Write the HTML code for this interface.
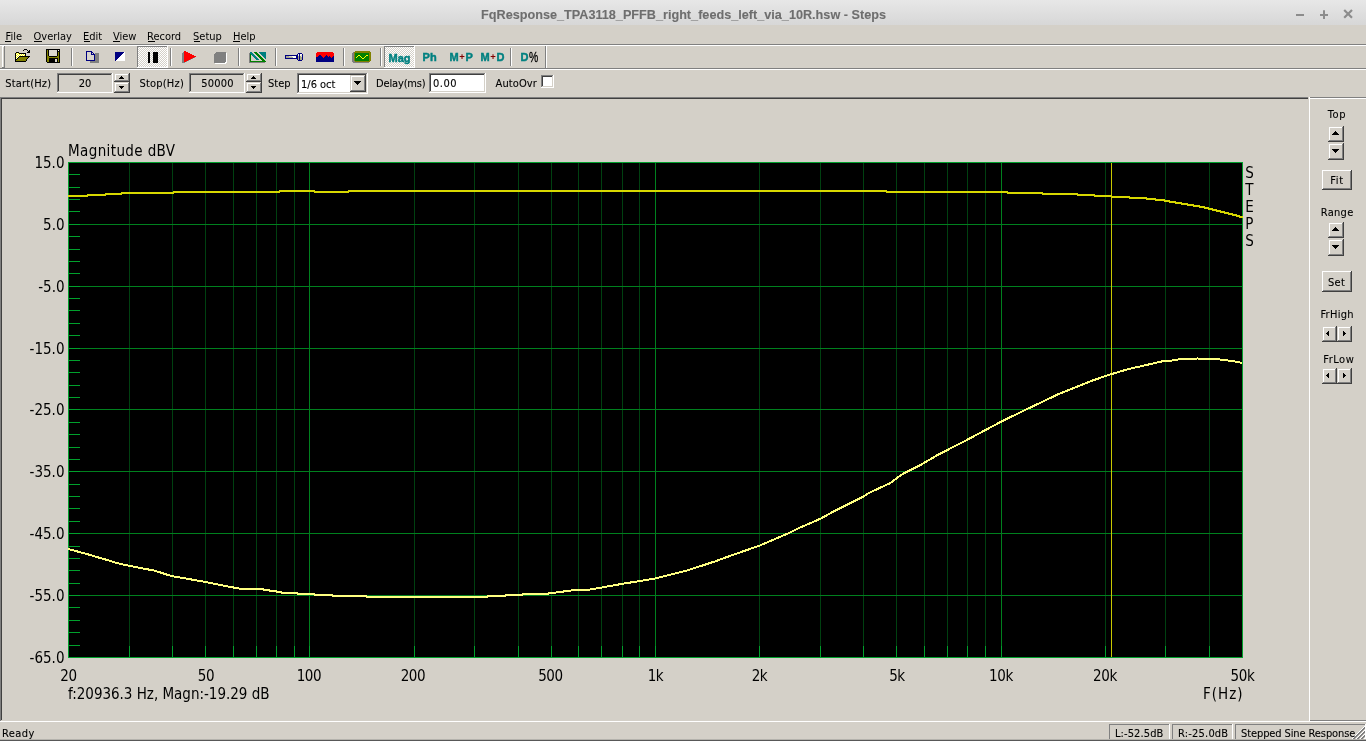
<!DOCTYPE html><html lang="en"><head><meta charset="utf-8"><title>FqResponse_TPA3118_PFFB_right_feeds_left_via_10R.hsw - Steps</title><style>html,body{margin:0;padding:0}body{width:1366px;height:741px;position:relative;overflow:hidden;background:#d4d0c8;font-family:"DejaVu Sans Condensed","Liberation Sans",sans-serif;font-size:11px;color:#000}svg{position:absolute;left:0;top:0;overflow:visible}.t{position:absolute;white-space:pre;margin:0;padding:0;-webkit-text-stroke:0.1px currentColor}u{text-decoration:underline;text-underline-offset:1px;text-decoration-thickness:1px}#titlebar{position:absolute;left:0;top:0;width:1366px;height:25px;background:linear-gradient(#e7e7e7,#d7d7d7)}#app{position:absolute;left:0;top:0;width:1366px;height:741px;overflow:hidden;will-change:transform}</style></head><body><div id="app"><div id="titlebar"></div><div id="title"><span class="t" id="ttl" style="top:8px;line-height:14px;font-size:12.66px;font-weight:700;color:#6e6e6e;font-family:'Liberation Sans','DejaVu Sans Condensed',sans-serif;left:383.5px;width:600px;text-align:center;">FqResponse_TPA3118_PFFB_right_feeds_left_via_10R.hsw - Steps</span><svg width="1366" height="741" viewBox="0 0 1366 741"><g stroke="#8c8c8c" stroke-width="2" fill="none"><path d="M1296 15H1304"/><path d="M1320 15H1328M1324 10.3V18.9"/><path d="M1344.2 10L1352 17.8M1352 10L1344.2 17.8" stroke-width="2.2"/></g></svg></div><div id="menubar"><span class="t" style="-webkit-text-stroke:0;top:30px;line-height:13px;left:5.5px;">File</span><span class="t" style="-webkit-text-stroke:0;top:30px;line-height:13px;left:33.5px;">Overlay</span><span class="t" style="-webkit-text-stroke:0;top:30px;line-height:13px;left:83px;">Edit</span><span class="t" style="-webkit-text-stroke:0;top:30px;line-height:13px;left:113px;">View</span><span class="t" style="-webkit-text-stroke:0;top:30px;line-height:13px;left:147px;">Record</span><span class="t" style="-webkit-text-stroke:0;top:30px;line-height:13px;left:193px;">Setup</span><span class="t" style="-webkit-text-stroke:0;top:30px;line-height:13px;left:233px;">Help</span><svg width="1366" height="741" viewBox="0 0 1366 741" shape-rendering="crispEdges"><rect x="0" y="44" width="1366" height="1" fill="#808080"/><rect x="0" y="45" width="1366" height="1" fill="#ffffff"/><rect x="5" y="41" width="6" height="1" fill="#000"/><rect x="34" y="41" width="8" height="1" fill="#000"/><rect x="84" y="41" width="6" height="1" fill="#000"/><rect x="113" y="41" width="7" height="1" fill="#000"/><rect x="148" y="41" width="7" height="1" fill="#000"/><rect x="194" y="41" width="6" height="1" fill="#000"/><rect x="233" y="41" width="7" height="1" fill="#000"/></svg></div><div id="toolbar"><svg width="1366" height="741" viewBox="0 0 1366 741" shape-rendering="crispEdges"><defs><pattern id="dith" width="2" height="2" patternUnits="userSpaceOnUse"><rect width="2" height="2" fill="#d4d0c8"/><rect width="1" height="1" fill="#fff"/><rect x="1" y="1" width="1" height="1" fill="#fff"/></pattern></defs><rect x="2" y="46" width="1" height="21" fill="#ffffff"/><rect x="2" y="46" width="2" height="1" fill="#ffffff"/><rect x="4" y="46" width="1" height="22" fill="#808080"/><rect x="2" y="67" width="3" height="1" fill="#808080"/><rect x="71" y="48" width="1" height="18" fill="#808080"/><rect x="72" y="48" width="1" height="18" fill="#ffffff"/><rect x="170" y="48" width="1" height="18" fill="#808080"/><rect x="171" y="48" width="1" height="18" fill="#ffffff"/><rect x="238" y="48" width="1" height="18" fill="#808080"/><rect x="239" y="48" width="1" height="18" fill="#ffffff"/><rect x="275" y="48" width="1" height="18" fill="#808080"/><rect x="276" y="48" width="1" height="18" fill="#ffffff"/><rect x="343" y="48" width="1" height="18" fill="#808080"/><rect x="344" y="48" width="1" height="18" fill="#ffffff"/><rect x="380" y="48" width="1" height="18" fill="#808080"/><rect x="381" y="48" width="1" height="18" fill="#ffffff"/><rect x="510" y="48" width="1" height="18" fill="#808080"/><rect x="511" y="48" width="1" height="18" fill="#ffffff"/><rect x="545" y="46" width="1" height="22" fill="#808080"/><rect x="546" y="46" width="1" height="22" fill="#ffffff"/><rect x="0" y="68" width="1366" height="1" fill="#808080"/><rect x="0" y="69" width="1366" height="1" fill="#ffffff"/><rect x="24" y="49" width="3" height="1" fill="#000"/><rect x="23" y="50" width="1" height="1" fill="#000"/><rect x="27" y="50" width="1" height="1" fill="#000"/><rect x="29" y="50" width="1" height="1" fill="#000"/><rect x="28" y="51" width="2" height="1" fill="#000"/><rect x="16" y="52" width="3" height="1" fill="#000"/><rect x="27" y="52" width="3" height="1" fill="#000"/><rect x="15" y="53" width="1" height="1" fill="#000"/><rect x="16" y="53" width="1" height="1" fill="#ffff00"/><rect x="17" y="53" width="1" height="1" fill="#fff"/><rect x="18" y="53" width="1" height="1" fill="#ffff00"/><rect x="19" y="53" width="7" height="1" fill="#000"/><rect x="15" y="54" width="1" height="1" fill="#000"/><rect x="16" y="54" width="1" height="1" fill="#fff"/><rect x="17" y="54" width="1" height="1" fill="#ffff00"/><rect x="18" y="54" width="1" height="1" fill="#fff"/><rect x="19" y="54" width="1" height="1" fill="#ffff00"/><rect x="20" y="54" width="1" height="1" fill="#fff"/><rect x="21" y="54" width="1" height="1" fill="#ffff00"/><rect x="22" y="54" width="1" height="1" fill="#fff"/><rect x="23" y="54" width="1" height="1" fill="#ffff00"/><rect x="24" y="54" width="1" height="1" fill="#fff"/><rect x="25" y="54" width="1" height="1" fill="#000"/><rect x="15" y="55" width="1" height="1" fill="#000"/><rect x="16" y="55" width="1" height="1" fill="#ffff00"/><rect x="17" y="55" width="1" height="1" fill="#fff"/><rect x="18" y="55" width="1" height="1" fill="#ffff00"/><rect x="19" y="55" width="1" height="1" fill="#fff"/><rect x="20" y="55" width="1" height="1" fill="#ffff00"/><rect x="21" y="55" width="1" height="1" fill="#fff"/><rect x="22" y="55" width="1" height="1" fill="#ffff00"/><rect x="23" y="55" width="1" height="1" fill="#fff"/><rect x="24" y="55" width="1" height="1" fill="#ffff00"/><rect x="25" y="55" width="1" height="1" fill="#000"/><rect x="15" y="56" width="1" height="1" fill="#000"/><rect x="16" y="56" width="1" height="1" fill="#fff"/><rect x="17" y="56" width="1" height="1" fill="#ffff00"/><rect x="18" y="56" width="1" height="1" fill="#fff"/><rect x="19" y="56" width="11" height="1" fill="#000"/><rect x="15" y="57" width="1" height="1" fill="#000"/><rect x="16" y="57" width="1" height="1" fill="#ffff00"/><rect x="17" y="57" width="1" height="1" fill="#fff"/><rect x="18" y="57" width="1" height="1" fill="#000"/><rect x="19" y="57" width="9" height="1" fill="#808000"/><rect x="28" y="57" width="1" height="1" fill="#000"/><rect x="15" y="58" width="1" height="1" fill="#000"/><rect x="16" y="58" width="1" height="1" fill="#fff"/><rect x="17" y="58" width="1" height="1" fill="#000"/><rect x="18" y="58" width="9" height="1" fill="#808000"/><rect x="27" y="58" width="1" height="1" fill="#000"/><rect x="15" y="59" width="2" height="1" fill="#000"/><rect x="17" y="59" width="9" height="1" fill="#808000"/><rect x="26" y="59" width="1" height="1" fill="#000"/><rect x="15" y="60" width="1" height="1" fill="#000"/><rect x="16" y="60" width="10" height="1" fill="#808000"/><rect x="26" y="60" width="1" height="1" fill="#000"/><rect x="15" y="61" width="11" height="1" fill="#000"/><rect x="46" y="49" width="14" height="1" fill="#000"/><rect x="46" y="50" width="1" height="1" fill="#000"/><rect x="47" y="50" width="1" height="1" fill="#808000"/><rect x="48" y="50" width="1" height="1" fill="#000"/><rect x="49" y="50" width="8" height="1" fill="#dcd8d0"/><rect x="57" y="50" width="1" height="1" fill="#000"/><rect x="58" y="50" width="1" height="1" fill="#fff"/><rect x="59" y="50" width="1" height="1" fill="#000"/><rect x="46" y="51" width="1" height="1" fill="#000"/><rect x="47" y="51" width="1" height="1" fill="#808000"/><rect x="48" y="51" width="1" height="1" fill="#000"/><rect x="49" y="51" width="8" height="1" fill="#dcd8d0"/><rect x="57" y="51" width="3" height="1" fill="#000"/><rect x="46" y="52" width="1" height="1" fill="#000"/><rect x="47" y="52" width="1" height="1" fill="#808000"/><rect x="48" y="52" width="1" height="1" fill="#000"/><rect x="49" y="52" width="8" height="1" fill="#dcd8d0"/><rect x="57" y="52" width="1" height="1" fill="#000"/><rect x="58" y="52" width="1" height="1" fill="#808000"/><rect x="59" y="52" width="1" height="1" fill="#000"/><rect x="46" y="53" width="1" height="1" fill="#000"/><rect x="47" y="53" width="1" height="1" fill="#808000"/><rect x="48" y="53" width="1" height="1" fill="#000"/><rect x="49" y="53" width="8" height="1" fill="#dcd8d0"/><rect x="57" y="53" width="1" height="1" fill="#000"/><rect x="58" y="53" width="1" height="1" fill="#808000"/><rect x="59" y="53" width="1" height="1" fill="#000"/><rect x="46" y="54" width="1" height="1" fill="#000"/><rect x="47" y="54" width="1" height="1" fill="#808000"/><rect x="48" y="54" width="1" height="1" fill="#000"/><rect x="49" y="54" width="8" height="1" fill="#dcd8d0"/><rect x="57" y="54" width="1" height="1" fill="#000"/><rect x="58" y="54" width="1" height="1" fill="#808000"/><rect x="59" y="54" width="1" height="1" fill="#000"/><rect x="46" y="55" width="1" height="1" fill="#000"/><rect x="47" y="55" width="1" height="1" fill="#808000"/><rect x="48" y="55" width="1" height="1" fill="#000"/><rect x="49" y="55" width="8" height="1" fill="#dcd8d0"/><rect x="57" y="55" width="1" height="1" fill="#000"/><rect x="58" y="55" width="1" height="1" fill="#808000"/><rect x="59" y="55" width="1" height="1" fill="#000"/><rect x="46" y="56" width="1" height="1" fill="#000"/><rect x="47" y="56" width="2" height="1" fill="#808000"/><rect x="49" y="56" width="8" height="1" fill="#000"/><rect x="57" y="56" width="2" height="1" fill="#808000"/><rect x="59" y="56" width="1" height="1" fill="#000"/><rect x="46" y="57" width="1" height="1" fill="#000"/><rect x="47" y="57" width="12" height="1" fill="#808000"/><rect x="59" y="57" width="1" height="1" fill="#000"/><rect x="46" y="58" width="1" height="1" fill="#000"/><rect x="47" y="58" width="2" height="1" fill="#808000"/><rect x="49" y="58" width="9" height="1" fill="#000"/><rect x="58" y="58" width="1" height="1" fill="#808000"/><rect x="59" y="58" width="1" height="1" fill="#000"/><rect x="46" y="59" width="1" height="1" fill="#000"/><rect x="47" y="59" width="2" height="1" fill="#808000"/><rect x="49" y="59" width="6" height="1" fill="#000"/><rect x="55" y="59" width="2" height="1" fill="#dcd8d0"/><rect x="57" y="59" width="1" height="1" fill="#000"/><rect x="58" y="59" width="1" height="1" fill="#808000"/><rect x="59" y="59" width="1" height="1" fill="#000"/><rect x="46" y="60" width="1" height="1" fill="#000"/><rect x="47" y="60" width="2" height="1" fill="#808000"/><rect x="49" y="60" width="6" height="1" fill="#000"/><rect x="55" y="60" width="2" height="1" fill="#dcd8d0"/><rect x="57" y="60" width="1" height="1" fill="#000"/><rect x="58" y="60" width="1" height="1" fill="#808000"/><rect x="59" y="60" width="1" height="1" fill="#000"/><rect x="46" y="61" width="1" height="1" fill="#000"/><rect x="47" y="61" width="2" height="1" fill="#808000"/><rect x="49" y="61" width="6" height="1" fill="#000"/><rect x="55" y="61" width="2" height="1" fill="#dcd8d0"/><rect x="57" y="61" width="1" height="1" fill="#000"/><rect x="58" y="61" width="1" height="1" fill="#808000"/><rect x="59" y="61" width="1" height="1" fill="#000"/><rect x="47" y="62" width="13" height="1" fill="#000"/><rect x="90" y="53" width="9" height="10" fill="#808080"/><rect x="87" y="52" width="7" height="8" fill="#d8d4cc"/><rect x="93" y="52" width="1" height="1" fill="#d4d0c8"/><rect x="94" y="53" width="1" height="1" fill="#d4d0c8"/><rect x="86" y="51" width="6" height="1" fill="#000080"/><rect x="86" y="52" width="1" height="1" fill="#000080"/><rect x="91" y="52" width="2" height="1" fill="#000080"/><rect x="86" y="53" width="1" height="1" fill="#000080"/><rect x="91" y="53" width="1" height="1" fill="#000080"/><rect x="93" y="53" width="1" height="1" fill="#000080"/><rect x="86" y="54" width="1" height="1" fill="#000080"/><rect x="91" y="54" width="4" height="1" fill="#000080"/><rect x="86" y="55" width="1" height="1" fill="#000080"/><rect x="94" y="55" width="1" height="1" fill="#000080"/><rect x="86" y="56" width="1" height="1" fill="#000080"/><rect x="94" y="56" width="1" height="1" fill="#000080"/><rect x="86" y="57" width="1" height="1" fill="#000080"/><rect x="94" y="57" width="1" height="1" fill="#000080"/><rect x="86" y="58" width="1" height="1" fill="#000080"/><rect x="94" y="58" width="1" height="1" fill="#000080"/><rect x="86" y="59" width="1" height="1" fill="#000080"/><rect x="94" y="59" width="1" height="1" fill="#000080"/><rect x="86" y="60" width="9" height="1" fill="#000080"/><rect x="115" y="52" width="9" height="1" fill="#000080"/><rect x="124" y="52" width="1" height="1" fill="#fff"/><rect x="115" y="53" width="8" height="1" fill="#000080"/><rect x="123" y="53" width="2" height="1" fill="#fff"/><rect x="115" y="54" width="7" height="1" fill="#000080"/><rect x="122" y="54" width="3" height="1" fill="#fff"/><rect x="115" y="55" width="6" height="1" fill="#000080"/><rect x="121" y="55" width="4" height="1" fill="#fff"/><rect x="115" y="56" width="5" height="1" fill="#000080"/><rect x="120" y="56" width="5" height="1" fill="#fff"/><rect x="115" y="57" width="4" height="1" fill="#000080"/><rect x="119" y="57" width="6" height="1" fill="#fff"/><rect x="115" y="58" width="3" height="1" fill="#000080"/><rect x="118" y="58" width="7" height="1" fill="#fff"/><rect x="115" y="59" width="2" height="1" fill="#000080"/><rect x="117" y="59" width="8" height="1" fill="#fff"/><rect x="115" y="60" width="1" height="1" fill="#000080"/><rect x="116" y="60" width="9" height="1" fill="#fff"/><rect x="137" y="46" width="31" height="22" fill="url(#dith)"/><rect x="137" y="46" width="30" height="1" fill="#808080"/><rect x="137" y="46" width="1" height="21" fill="#808080"/><rect x="137" y="67" width="31" height="1" fill="#ffffff"/><rect x="167" y="46" width="1" height="22" fill="#ffffff"/><rect x="148" y="52" width="2" height="11" fill="#000"/><rect x="153" y="52" width="5" height="11" fill="#000"/><rect x="183" y="52" width="2" height="1" fill="#808080"/><rect x="183" y="53" width="4" height="1" fill="#808080"/><rect x="182" y="53" width="1" height="1" fill="#808080"/><rect x="183" y="54" width="6" height="1" fill="#808080"/><rect x="182" y="54" width="1" height="1" fill="#808080"/><rect x="183" y="55" width="8" height="1" fill="#808080"/><rect x="182" y="55" width="1" height="1" fill="#808080"/><rect x="183" y="56" width="10" height="1" fill="#808080"/><rect x="182" y="56" width="1" height="1" fill="#808080"/><rect x="183" y="57" width="12" height="1" fill="#808080"/><rect x="182" y="57" width="1" height="1" fill="#808080"/><rect x="183" y="58" width="10" height="1" fill="#808080"/><rect x="182" y="58" width="1" height="1" fill="#808080"/><rect x="183" y="59" width="8" height="1" fill="#808080"/><rect x="182" y="59" width="1" height="1" fill="#808080"/><rect x="183" y="60" width="6" height="1" fill="#808080"/><rect x="182" y="60" width="1" height="1" fill="#808080"/><rect x="183" y="61" width="4" height="1" fill="#808080"/><rect x="182" y="61" width="1" height="1" fill="#808080"/><rect x="183" y="62" width="2" height="1" fill="#808080"/><rect x="182" y="62" width="1" height="1" fill="#808080"/><rect x="184" y="51" width="2" height="1" fill="#ff0000"/><rect x="184" y="52" width="4" height="1" fill="#ff0000"/><rect x="184" y="53" width="6" height="1" fill="#ff0000"/><rect x="184" y="54" width="8" height="1" fill="#ff0000"/><rect x="184" y="55" width="10" height="1" fill="#ff0000"/><rect x="184" y="56" width="12" height="1" fill="#ff0000"/><rect x="184" y="57" width="10" height="1" fill="#ff0000"/><rect x="184" y="58" width="8" height="1" fill="#ff0000"/><rect x="184" y="59" width="6" height="1" fill="#ff0000"/><rect x="184" y="60" width="4" height="1" fill="#ff0000"/><rect x="184" y="61" width="2" height="1" fill="#ff0000"/><rect x="217" y="53" width="10" height="1" fill="#fff"/><rect x="216" y="54" width="11" height="1" fill="#fff"/><rect x="215" y="55" width="12" height="8" fill="#fff"/><rect x="215" y="63" width="11" height="1" fill="#fff"/><rect x="216" y="52" width="10" height="1" fill="#808080"/><rect x="215" y="53" width="11" height="1" fill="#808080"/><rect x="214" y="54" width="12" height="8" fill="#808080"/><rect x="214" y="62" width="11" height="1" fill="#808080"/><rect x="249" y="53" width="1" height="10" fill="#808080"/><rect x="249" y="62" width="16" height="1" fill="#808080"/><rect x="250" y="52" width="2" height="1" fill="#008080"/><rect x="250" y="53" width="3" height="1" fill="#008080"/><rect x="251" y="54" width="3" height="1" fill="#008080"/><rect x="252" y="55" width="3" height="1" fill="#008080"/><rect x="253" y="56" width="3" height="1" fill="#008080"/><rect x="254" y="57" width="3" height="1" fill="#008080"/><rect x="255" y="58" width="3" height="1" fill="#008080"/><rect x="256" y="59" width="3" height="1" fill="#008080"/><rect x="259" y="52" width="7" height="1" fill="#008080"/><rect x="260" y="53" width="6" height="1" fill="#008080"/><rect x="261" y="54" width="5" height="1" fill="#008080"/><rect x="262" y="55" width="4" height="1" fill="#008080"/><rect x="263" y="56" width="3" height="1" fill="#008080"/><rect x="264" y="57" width="2" height="1" fill="#008080"/><rect x="265" y="58" width="1" height="1" fill="#008080"/><rect x="254" y="52" width="3" height="1" fill="#008000"/><rect x="255" y="53" width="3" height="1" fill="#008000"/><rect x="256" y="54" width="3" height="1" fill="#008000"/><rect x="257" y="55" width="3" height="1" fill="#008000"/><rect x="258" y="56" width="3" height="1" fill="#008000"/><rect x="259" y="57" width="3" height="1" fill="#008000"/><rect x="260" y="58" width="3" height="1" fill="#008000"/><rect x="261" y="59" width="3" height="1" fill="#008000"/><rect x="262" y="60" width="3" height="1" fill="#008000"/><rect x="263" y="61" width="3" height="1" fill="#008000"/><rect x="250" y="54" width="1" height="8" fill="#008000"/><rect x="250" y="61" width="16" height="1" fill="#008000"/><rect x="285" y="55" width="13" height="4" fill="#000080"/><rect x="286" y="56" width="10" height="2" fill="#fffff0"/><rect x="286" y="56" width="3" height="1" fill="#a8a890"/><rect x="289" y="56" width="3" height="1" fill="#d8d8c8"/><rect x="286" y="57" width="7" height="1" fill="#a8a890"/><rect x="298" y="53" width="4" height="8" fill="#000080"/><rect x="297" y="54" width="6" height="6" fill="#000080"/><rect x="298" y="54" width="1" height="2" fill="#f4f4e4"/><rect x="298" y="56" width="1" height="4" fill="#a4a488"/><rect x="300" y="54" width="2" height="2" fill="#fffff0"/><rect x="300" y="56" width="2" height="4" fill="#a8a888"/><rect x="301" y="55" width="1" height="2" fill="#e0e0d0"/><rect x="316" y="53" width="1" height="4" fill="#ff0000"/><rect x="316" y="57" width="1" height="5" fill="#000080"/><rect x="317" y="52" width="1" height="5" fill="#ff0000"/><rect x="317" y="57" width="1" height="5" fill="#000080"/><rect x="318" y="52" width="1" height="4" fill="#ff0000"/><rect x="318" y="56" width="1" height="6" fill="#000080"/><rect x="319" y="52" width="1" height="3" fill="#ff0000"/><rect x="319" y="55" width="1" height="7" fill="#000080"/><rect x="320" y="52" width="1" height="3" fill="#ff0000"/><rect x="320" y="55" width="1" height="7" fill="#000080"/><rect x="321" y="52" width="1" height="4" fill="#ff0000"/><rect x="321" y="56" width="1" height="6" fill="#000080"/><rect x="322" y="52" width="1" height="5" fill="#ff0000"/><rect x="322" y="57" width="1" height="5" fill="#000080"/><rect x="323" y="52" width="1" height="6" fill="#ff0000"/><rect x="323" y="58" width="1" height="4" fill="#000080"/><rect x="324" y="52" width="1" height="5" fill="#ff0000"/><rect x="324" y="57" width="1" height="5" fill="#000080"/><rect x="325" y="52" width="1" height="4" fill="#ff0000"/><rect x="325" y="56" width="1" height="6" fill="#000080"/><rect x="326" y="52" width="1" height="3" fill="#ff0000"/><rect x="326" y="55" width="1" height="7" fill="#000080"/><rect x="327" y="52" width="1" height="4" fill="#ff0000"/><rect x="327" y="56" width="1" height="6" fill="#000080"/><rect x="328" y="52" width="1" height="5" fill="#ff0000"/><rect x="328" y="57" width="1" height="5" fill="#000080"/><rect x="329" y="52" width="1" height="4" fill="#ff0000"/><rect x="329" y="56" width="1" height="6" fill="#000080"/><rect x="330" y="52" width="1" height="5" fill="#ff0000"/><rect x="330" y="57" width="1" height="5" fill="#000080"/><rect x="331" y="52" width="1" height="6" fill="#ff0000"/><rect x="331" y="58" width="1" height="4" fill="#000080"/><rect x="332" y="52" width="1" height="5" fill="#ff0000"/><rect x="332" y="57" width="1" height="5" fill="#000080"/><rect x="333" y="53" width="1" height="3" fill="#ff0000"/><rect x="333" y="56" width="1" height="6" fill="#000080"/><rect x="352" y="53" width="3" height="9" fill="#808080"/><rect x="353" y="52" width="1" height="1" fill="#808080"/><rect x="353" y="62" width="16" height="1" fill="#808080"/><rect x="355" y="51" width="15" height="11" fill="#808000"/><rect x="354" y="52" width="17" height="9" fill="#808000"/><rect x="355" y="53" width="14" height="8" fill="#008000"/><rect x="356" y="57" width="1" height="1" fill="#ffff00"/><rect x="357" y="56" width="1" height="1" fill="#ffff00"/><rect x="358" y="55" width="1" height="1" fill="#ffff00"/><rect x="359" y="55" width="1" height="1" fill="#ffff00"/><rect x="360" y="56" width="1" height="1" fill="#ffff00"/><rect x="361" y="57" width="1" height="1" fill="#ffff00"/><rect x="362" y="58" width="1" height="1" fill="#ffff00"/><rect x="363" y="58" width="1" height="1" fill="#ffff00"/><rect x="364" y="57" width="1" height="1" fill="#ffff00"/><rect x="365" y="56" width="1" height="1" fill="#ffff00"/><rect x="366" y="55" width="1" height="1" fill="#ffff00"/><rect x="367" y="55" width="1" height="1" fill="#ffff00"/><rect x="384" y="46" width="31" height="22" fill="url(#dith)"/><rect x="384" y="46" width="30" height="1" fill="#808080"/><rect x="384" y="46" width="1" height="21" fill="#808080"/><rect x="384" y="67" width="31" height="1" fill="#ffffff"/><rect x="414" y="46" width="1" height="22" fill="#ffffff"/></svg><span class="t" id="tMag" style="-webkit-text-stroke:0.45px #008080;top:52px;line-height:12px;font-weight:700;color:#008080;font-family:'Liberation Sans','DejaVu Sans Condensed',sans-serif;left:388.6px;">Mag</span><span class="t" id="tPh" style="-webkit-text-stroke:0.45px #008080;top:51px;line-height:12px;font-weight:700;color:#008080;font-family:'Liberation Sans','DejaVu Sans Condensed',sans-serif;left:422.6px;">Ph</span><span class="t" id="tMP" style="-webkit-text-stroke:0.45px #008080;top:51px;line-height:12px;font-weight:700;color:#008080;font-family:'Liberation Sans','DejaVu Sans Condensed',sans-serif;left:449.6px;">M<span style="color:#800000;-webkit-text-stroke:0;font-size:9.5px;position:relative;top:-1.5px;margin:0 0.6px">+</span>P</span><span class="t" id="tMD" style="-webkit-text-stroke:0.45px #008080;top:51px;line-height:12px;font-weight:700;color:#008080;font-family:'Liberation Sans','DejaVu Sans Condensed',sans-serif;left:480.6px;">M<span style="color:#800000;-webkit-text-stroke:0;font-size:9.5px;position:relative;top:-1.5px;margin:0 0.6px">+</span>D</span><span class="t" id="tD" style="-webkit-text-stroke:0.45px #008080;top:51px;line-height:12px;font-weight:700;color:#008080;font-family:'Liberation Sans','DejaVu Sans Condensed',sans-serif;left:520.6px;">D<span style="display:inline-block;transform:scaleX(.74);transform-origin:0 100%;font-size:14px;font-weight:400;color:#000;-webkit-text-stroke:0.3px #000;margin-left:0.9px;line-height:10px;position:relative;top:1px">%</span></span></div><div id="ctrlbar"><svg width="1366" height="741" viewBox="0 0 1366 741" shape-rendering="crispEdges"><rect x="57" y="73" width="56" height="20" fill="#d4d0c8"/><rect x="57" y="73" width="55" height="1" fill="#808080"/><rect x="57" y="73" width="1" height="19" fill="#808080"/><rect x="57" y="92" width="56" height="1" fill="#ffffff"/><rect x="112" y="73" width="1" height="20" fill="#ffffff"/><rect x="58" y="74" width="53" height="1" fill="#404040"/><rect x="58" y="74" width="1" height="17" fill="#404040"/><rect x="58" y="91" width="54" height="1" fill="#d4d0c8"/><rect x="111" y="74" width="1" height="18" fill="#d4d0c8"/><rect x="114" y="73" width="16" height="9" fill="#d4d0c8"/><rect x="114" y="73" width="15" height="1" fill="#d4d0c8"/><rect x="114" y="73" width="1" height="8" fill="#d4d0c8"/><rect x="114" y="81" width="16" height="1" fill="#404040"/><rect x="129" y="73" width="1" height="9" fill="#404040"/><rect x="115" y="74" width="13" height="1" fill="#ffffff"/><rect x="115" y="74" width="1" height="6" fill="#ffffff"/><rect x="115" y="80" width="14" height="1" fill="#808080"/><rect x="128" y="74" width="1" height="7" fill="#808080"/><rect x="114" y="82" width="16" height="11" fill="#d4d0c8"/><rect x="114" y="82" width="15" height="1" fill="#d4d0c8"/><rect x="114" y="82" width="1" height="10" fill="#d4d0c8"/><rect x="114" y="92" width="16" height="1" fill="#404040"/><rect x="129" y="82" width="1" height="11" fill="#404040"/><rect x="115" y="83" width="13" height="1" fill="#ffffff"/><rect x="115" y="83" width="1" height="8" fill="#ffffff"/><rect x="115" y="91" width="14" height="1" fill="#808080"/><rect x="128" y="83" width="1" height="9" fill="#808080"/><rect x="121" y="76" width="1" height="1" fill="#000"/><rect x="120" y="77" width="3" height="1" fill="#000"/><rect x="119" y="78" width="5" height="1" fill="#000"/><rect x="119" y="86" width="5" height="1" fill="#000"/><rect x="120" y="87" width="3" height="1" fill="#000"/><rect x="121" y="88" width="1" height="1" fill="#000"/><rect x="189" y="73" width="56" height="20" fill="#d4d0c8"/><rect x="189" y="73" width="55" height="1" fill="#808080"/><rect x="189" y="73" width="1" height="19" fill="#808080"/><rect x="189" y="92" width="56" height="1" fill="#ffffff"/><rect x="244" y="73" width="1" height="20" fill="#ffffff"/><rect x="190" y="74" width="53" height="1" fill="#404040"/><rect x="190" y="74" width="1" height="17" fill="#404040"/><rect x="190" y="91" width="54" height="1" fill="#d4d0c8"/><rect x="243" y="74" width="1" height="18" fill="#d4d0c8"/><rect x="246" y="73" width="16" height="9" fill="#d4d0c8"/><rect x="246" y="73" width="15" height="1" fill="#d4d0c8"/><rect x="246" y="73" width="1" height="8" fill="#d4d0c8"/><rect x="246" y="81" width="16" height="1" fill="#404040"/><rect x="261" y="73" width="1" height="9" fill="#404040"/><rect x="247" y="74" width="13" height="1" fill="#ffffff"/><rect x="247" y="74" width="1" height="6" fill="#ffffff"/><rect x="247" y="80" width="14" height="1" fill="#808080"/><rect x="260" y="74" width="1" height="7" fill="#808080"/><rect x="246" y="82" width="16" height="11" fill="#d4d0c8"/><rect x="246" y="82" width="15" height="1" fill="#d4d0c8"/><rect x="246" y="82" width="1" height="10" fill="#d4d0c8"/><rect x="246" y="92" width="16" height="1" fill="#404040"/><rect x="261" y="82" width="1" height="11" fill="#404040"/><rect x="247" y="83" width="13" height="1" fill="#ffffff"/><rect x="247" y="83" width="1" height="8" fill="#ffffff"/><rect x="247" y="91" width="14" height="1" fill="#808080"/><rect x="260" y="83" width="1" height="9" fill="#808080"/><rect x="253" y="76" width="1" height="1" fill="#000"/><rect x="252" y="77" width="3" height="1" fill="#000"/><rect x="251" y="78" width="5" height="1" fill="#000"/><rect x="251" y="86" width="5" height="1" fill="#000"/><rect x="252" y="87" width="3" height="1" fill="#000"/><rect x="253" y="88" width="1" height="1" fill="#000"/><rect x="297" y="73" width="71" height="21" fill="#fff"/><rect x="297" y="73" width="70" height="1" fill="#808080"/><rect x="297" y="73" width="1" height="20" fill="#808080"/><rect x="297" y="93" width="71" height="1" fill="#ffffff"/><rect x="367" y="73" width="1" height="21" fill="#ffffff"/><rect x="298" y="74" width="68" height="1" fill="#404040"/><rect x="298" y="74" width="1" height="18" fill="#404040"/><rect x="298" y="92" width="69" height="1" fill="#d4d0c8"/><rect x="366" y="74" width="1" height="19" fill="#d4d0c8"/><rect x="350" y="75" width="16" height="17" fill="#d4d0c8"/><rect x="350" y="75" width="15" height="1" fill="#d4d0c8"/><rect x="350" y="75" width="1" height="16" fill="#d4d0c8"/><rect x="350" y="91" width="16" height="1" fill="#404040"/><rect x="365" y="75" width="1" height="17" fill="#404040"/><rect x="351" y="76" width="13" height="1" fill="#ffffff"/><rect x="351" y="76" width="1" height="14" fill="#ffffff"/><rect x="351" y="90" width="14" height="1" fill="#808080"/><rect x="364" y="76" width="1" height="15" fill="#808080"/><rect x="354" y="81" width="7" height="1" fill="#000"/><rect x="355" y="82" width="5" height="1" fill="#000"/><rect x="356" y="83" width="3" height="1" fill="#000"/><rect x="357" y="84" width="1" height="1" fill="#000"/><rect x="429" y="73" width="57" height="20" fill="#fff"/><rect x="429" y="73" width="56" height="1" fill="#808080"/><rect x="429" y="73" width="1" height="19" fill="#808080"/><rect x="429" y="92" width="57" height="1" fill="#ffffff"/><rect x="485" y="73" width="1" height="20" fill="#ffffff"/><rect x="430" y="74" width="54" height="1" fill="#404040"/><rect x="430" y="74" width="1" height="17" fill="#404040"/><rect x="430" y="91" width="55" height="1" fill="#d4d0c8"/><rect x="484" y="74" width="1" height="18" fill="#d4d0c8"/><rect x="541" y="75" width="13" height="13" fill="#fff"/><rect x="541" y="75" width="12" height="1" fill="#808080"/><rect x="541" y="75" width="1" height="12" fill="#808080"/><rect x="541" y="87" width="13" height="1" fill="#ffffff"/><rect x="553" y="75" width="1" height="13" fill="#ffffff"/><rect x="542" y="76" width="10" height="1" fill="#404040"/><rect x="542" y="76" width="1" height="10" fill="#404040"/><rect x="542" y="86" width="11" height="1" fill="#d4d0c8"/><rect x="552" y="76" width="1" height="11" fill="#d4d0c8"/></svg><span class="t" id="cStart" style="top:77px;line-height:13px;letter-spacing:0.15px;left:5.3px;">Start(Hz)</span><span class="t" id="c20" style="top:77px;line-height:13px;left:60.0px;width:50px;text-align:center;">20</span><span class="t" id="cStop" style="top:77px;line-height:13px;letter-spacing:0.2px;left:139.5px;">Stop(Hz)</span><span class="t" id="c50000" style="top:77px;line-height:13px;letter-spacing:0.2px;left:192.5px;width:50px;text-align:center;">50000</span><span class="t" id="cStep" style="top:77px;line-height:13px;left:268px;">Step</span><span class="t" id="cOct" style="top:78px;line-height:13px;left:301px;">1/6 oct</span><span class="t" id="cDelay" style="top:77px;line-height:13px;letter-spacing:-0.15px;left:376px;">Delay(ms)</span><span class="t" id="c000" style="top:77px;line-height:13px;letter-spacing:0.5px;left:433px;">0.00</span><span class="t" id="cAuto" style="top:77px;line-height:13px;letter-spacing:0.1px;left:495.6px;">AutoOvr</span></div><div id="view"><svg width="1366" height="741" viewBox="0 0 1366 741" shape-rendering="crispEdges"><rect x="0" y="97" width="1308" height="1" fill="#808080"/><rect x="0" y="97" width="1" height="624" fill="#808080"/><rect x="1" y="98" width="1307" height="1" fill="#404040"/><rect x="1" y="98" width="1" height="622" fill="#404040"/><rect x="68" y="162" width="1175" height="496" fill="#000"/><rect x="129" y="163" width="1" height="494" fill="#004010"/><rect x="172" y="163" width="1" height="494" fill="#004010"/><rect x="205" y="163" width="1" height="494" fill="#004010"/><rect x="233" y="163" width="1" height="494" fill="#004010"/><rect x="256" y="163" width="1" height="494" fill="#004010"/><rect x="276" y="163" width="1" height="494" fill="#004010"/><rect x="294" y="163" width="1" height="494" fill="#004010"/><rect x="309" y="163" width="1" height="494" fill="#00801e"/><rect x="414" y="163" width="1" height="494" fill="#004010"/><rect x="474" y="163" width="1" height="494" fill="#004010"/><rect x="518" y="163" width="1" height="494" fill="#004010"/><rect x="551" y="163" width="1" height="494" fill="#004010"/><rect x="578" y="163" width="1" height="494" fill="#004010"/><rect x="601" y="163" width="1" height="494" fill="#004010"/><rect x="622" y="163" width="1" height="494" fill="#004010"/><rect x="639" y="163" width="1" height="494" fill="#004010"/><rect x="655" y="163" width="1" height="494" fill="#00801e"/><rect x="759" y="163" width="1" height="494" fill="#004010"/><rect x="820" y="163" width="1" height="494" fill="#004010"/><rect x="863" y="163" width="1" height="494" fill="#004010"/><rect x="896" y="163" width="1" height="494" fill="#004010"/><rect x="924" y="163" width="1" height="494" fill="#004010"/><rect x="947" y="163" width="1" height="494" fill="#004010"/><rect x="967" y="163" width="1" height="494" fill="#004010"/><rect x="985" y="163" width="1" height="494" fill="#004010"/><rect x="1001" y="163" width="1" height="494" fill="#00801e"/><rect x="1105" y="163" width="1" height="494" fill="#004010"/><rect x="1165" y="163" width="1" height="494" fill="#004010"/><rect x="1209" y="163" width="1" height="494" fill="#004010"/><rect x="69" y="224" width="1173" height="1" fill="#00801e"/><rect x="69" y="286" width="1173" height="1" fill="#00801e"/><rect x="69" y="348" width="1173" height="1" fill="#00801e"/><rect x="69" y="409" width="1173" height="1" fill="#00801e"/><rect x="69" y="471" width="1173" height="1" fill="#00801e"/><rect x="69" y="533" width="1173" height="1" fill="#00801e"/><rect x="69" y="595" width="1173" height="1" fill="#00801e"/><rect x="68" y="174" width="12" height="1" fill="#00a02c"/><rect x="68" y="187" width="12" height="1" fill="#00a02c"/><rect x="68" y="199" width="12" height="1" fill="#00a02c"/><rect x="68" y="211" width="12" height="1" fill="#00a02c"/><rect x="68" y="224" width="12" height="1" fill="#00a02c"/><rect x="68" y="236" width="12" height="1" fill="#00a02c"/><rect x="68" y="249" width="12" height="1" fill="#00a02c"/><rect x="68" y="261" width="12" height="1" fill="#00a02c"/><rect x="68" y="273" width="12" height="1" fill="#00a02c"/><rect x="68" y="286" width="12" height="1" fill="#00a02c"/><rect x="68" y="298" width="12" height="1" fill="#00a02c"/><rect x="68" y="310" width="12" height="1" fill="#00a02c"/><rect x="68" y="323" width="12" height="1" fill="#00a02c"/><rect x="68" y="335" width="12" height="1" fill="#00a02c"/><rect x="68" y="348" width="12" height="1" fill="#00a02c"/><rect x="68" y="360" width="12" height="1" fill="#00a02c"/><rect x="68" y="372" width="12" height="1" fill="#00a02c"/><rect x="68" y="385" width="12" height="1" fill="#00a02c"/><rect x="68" y="397" width="12" height="1" fill="#00a02c"/><rect x="68" y="409" width="12" height="1" fill="#00a02c"/><rect x="68" y="422" width="12" height="1" fill="#00a02c"/><rect x="68" y="434" width="12" height="1" fill="#00a02c"/><rect x="68" y="447" width="12" height="1" fill="#00a02c"/><rect x="68" y="459" width="12" height="1" fill="#00a02c"/><rect x="68" y="471" width="12" height="1" fill="#00a02c"/><rect x="68" y="484" width="12" height="1" fill="#00a02c"/><rect x="68" y="496" width="12" height="1" fill="#00a02c"/><rect x="68" y="508" width="12" height="1" fill="#00a02c"/><rect x="68" y="521" width="12" height="1" fill="#00a02c"/><rect x="68" y="533" width="12" height="1" fill="#00a02c"/><rect x="68" y="546" width="12" height="1" fill="#00a02c"/><rect x="68" y="558" width="12" height="1" fill="#00a02c"/><rect x="68" y="570" width="12" height="1" fill="#00a02c"/><rect x="68" y="583" width="12" height="1" fill="#00a02c"/><rect x="68" y="595" width="12" height="1" fill="#00a02c"/><rect x="68" y="607" width="12" height="1" fill="#00a02c"/><rect x="68" y="620" width="12" height="1" fill="#00a02c"/><rect x="68" y="632" width="12" height="1" fill="#00a02c"/><rect x="68" y="645" width="12" height="1" fill="#00a02c"/><rect x="129" y="646" width="1" height="12" fill="#00a02c"/><rect x="172" y="646" width="1" height="12" fill="#00a02c"/><rect x="205" y="646" width="1" height="12" fill="#00a02c"/><rect x="233" y="646" width="1" height="12" fill="#00a02c"/><rect x="256" y="646" width="1" height="12" fill="#00a02c"/><rect x="276" y="646" width="1" height="12" fill="#00a02c"/><rect x="294" y="646" width="1" height="12" fill="#00a02c"/><rect x="309" y="646" width="1" height="12" fill="#00a02c"/><rect x="414" y="646" width="1" height="12" fill="#00a02c"/><rect x="474" y="646" width="1" height="12" fill="#00a02c"/><rect x="518" y="646" width="1" height="12" fill="#00a02c"/><rect x="551" y="646" width="1" height="12" fill="#00a02c"/><rect x="578" y="646" width="1" height="12" fill="#00a02c"/><rect x="601" y="646" width="1" height="12" fill="#00a02c"/><rect x="622" y="646" width="1" height="12" fill="#00a02c"/><rect x="639" y="646" width="1" height="12" fill="#00a02c"/><rect x="655" y="646" width="1" height="12" fill="#00a02c"/><rect x="759" y="646" width="1" height="12" fill="#00a02c"/><rect x="820" y="646" width="1" height="12" fill="#00a02c"/><rect x="863" y="646" width="1" height="12" fill="#00a02c"/><rect x="896" y="646" width="1" height="12" fill="#00a02c"/><rect x="924" y="646" width="1" height="12" fill="#00a02c"/><rect x="947" y="646" width="1" height="12" fill="#00a02c"/><rect x="967" y="646" width="1" height="12" fill="#00a02c"/><rect x="985" y="646" width="1" height="12" fill="#00a02c"/><rect x="1001" y="646" width="1" height="12" fill="#00a02c"/><rect x="1105" y="646" width="1" height="12" fill="#00a02c"/><rect x="1165" y="646" width="1" height="12" fill="#00a02c"/><rect x="1209" y="646" width="1" height="12" fill="#00a02c"/><rect x="68" y="162" width="1175" height="1" fill="#00a02c"/><rect x="68" y="657" width="1175" height="1" fill="#00a02c"/><rect x="68" y="162" width="1" height="496" fill="#00a02c"/><rect x="1242" y="162" width="1" height="496" fill="#00a02c"/><rect x="1111" y="163" width="1" height="494" fill="#c8c800"/><rect x="68" y="195" width="20" height="2" fill="#d8d800"/><rect x="87" y="194" width="19" height="2" fill="#d8d800"/><rect x="105" y="193" width="17" height="2" fill="#d8d800"/><rect x="121" y="192" width="53" height="2" fill="#d8d800"/><rect x="173" y="191" width="107" height="2" fill="#d8d800"/><rect x="279" y="190" width="36" height="2" fill="#d8d800"/><rect x="314" y="191" width="35" height="2" fill="#d8d800"/><rect x="348" y="190" width="539" height="2" fill="#d8d800"/><rect x="886" y="191" width="122" height="2" fill="#d8d800"/><rect x="1007" y="192" width="36" height="2" fill="#d8d800"/><rect x="1042" y="193" width="36" height="2" fill="#d8d800"/><rect x="1077" y="194" width="18" height="2" fill="#d8d800"/><rect x="1094" y="195" width="18" height="2" fill="#d8d800"/><rect x="1111" y="196" width="19" height="2" fill="#d8d800"/><rect x="1129" y="197" width="18" height="2" fill="#d8d800"/><rect x="1146" y="198" width="10" height="2" fill="#d8d800"/><rect x="1155" y="199" width="10" height="2" fill="#d8d800"/><rect x="1164" y="200" width="6" height="2" fill="#d8d800"/><rect x="1169" y="201" width="7" height="2" fill="#d8d800"/><rect x="1175" y="202" width="7" height="2" fill="#d8d800"/><rect x="1181" y="203" width="7" height="2" fill="#d8d800"/><rect x="1187" y="204" width="7" height="2" fill="#d8d800"/><rect x="1193" y="205" width="7" height="2" fill="#d8d800"/><rect x="1199" y="206" width="6" height="2" fill="#d8d800"/><rect x="1204" y="207" width="5" height="2" fill="#d8d800"/><rect x="1208" y="208" width="5" height="2" fill="#d8d800"/><rect x="1212" y="209" width="5" height="2" fill="#d8d800"/><rect x="1216" y="210" width="5" height="2" fill="#d8d800"/><rect x="1220" y="211" width="5" height="2" fill="#d8d800"/><rect x="1224" y="212" width="5" height="2" fill="#d8d800"/><rect x="1228" y="213" width="5" height="2" fill="#d8d800"/><rect x="1232" y="214" width="5" height="2" fill="#d8d800"/><rect x="1236" y="215" width="4" height="2" fill="#d8d800"/><rect x="1239" y="216" width="4" height="2" fill="#d8d800"/><polyline fill="none" stroke="#ffff80" stroke-width="2" points="68,549 85.3,553.6 102.7,558.7 120,563.9 137.3,567.4 154.7,570.7 172,576.2 189.3,579.1 206.7,582.2 224,585.7 241.3,589 243,589"/><polyline fill="none" stroke="#ffff80" stroke-width="2" points="547,594 548.8,593.4 573.7,590.2 590.5,589.5 622,583.9 655.7,578.4 686.4,570.7 715.7,561.2 730,555.9 759.3,545.7 788.6,533.2 798.8,528.1 820.8,518.6 834,511.2 863.2,496.6 869,492.9 889.6,483.4 902.8,473.9 920,465.3 937,455.3 967,439.9 1001.8,421.3 1025.3,409.9 1043,401.5 1059.3,393.7 1094,380 1111,374.2 1128.7,369 1145.6,365.2 1163.2,361.1 1172,360.5 1181.4,359 1197.8,358.5 1215.3,359 1224.7,360.1 1234,361.4 1242,362.8"/><rect x="242" y="588" width="22" height="2" fill="#ffff80"/><rect x="263" y="589" width="7" height="2" fill="#ffff80"/><rect x="269" y="590" width="8" height="2" fill="#ffff80"/><rect x="276" y="591" width="6" height="2" fill="#ffff80"/><rect x="281" y="592" width="17" height="2" fill="#ffff80"/><rect x="297" y="593" width="18" height="2" fill="#ffff80"/><rect x="314" y="594" width="19" height="2" fill="#ffff80"/><rect x="332" y="595" width="35" height="2" fill="#ffff80"/><rect x="366" y="596" width="122" height="2" fill="#ffff80"/><rect x="487" y="595" width="19" height="2" fill="#ffff80"/><rect x="505" y="594" width="18" height="2" fill="#ffff80"/><rect x="522" y="593" width="27" height="2" fill="#ffff80"/></svg><svg width="1366" height="741" viewBox="0 0 1366 741" font-family="'DejaVu Sans Condensed','Liberation Sans',sans-serif" font-size="15" fill="#000"><text x="64.5" y="168" text-anchor="end">15.0</text><text x="64.5" y="230" text-anchor="end">5.0</text><text x="64.5" y="292" text-anchor="end">-5.0</text><text x="64.5" y="354" text-anchor="end">-15.0</text><text x="64.5" y="415" text-anchor="end">-25.0</text><text x="64.5" y="477" text-anchor="end">-35.0</text><text x="64.5" y="539" text-anchor="end">-45.0</text><text x="64.5" y="601" text-anchor="end">-55.0</text><text x="64.5" y="663" text-anchor="end">-65.0</text><text x="68.5" y="681" text-anchor="middle" letter-spacing="-0.35">20</text><text x="206.0" y="681" text-anchor="middle" letter-spacing="-0.35">50</text><text x="309.0" y="681" text-anchor="middle" letter-spacing="-0.35">100</text><text x="413.0" y="681" text-anchor="middle" letter-spacing="-0.35">200</text><text x="550.5" y="681" text-anchor="middle" letter-spacing="-0.35">500</text><text x="655.5" y="681" text-anchor="middle" letter-spacing="-0.35">1k</text><text x="759.5" y="681" text-anchor="middle" letter-spacing="-0.35">2k</text><text x="897.0" y="681" text-anchor="middle" letter-spacing="-0.35">5k</text><text x="1001.0" y="681" text-anchor="middle" letter-spacing="-0.35">10k</text><text x="1105.0" y="681" text-anchor="middle" letter-spacing="-0.35">20k</text><text x="1242.5" y="681" text-anchor="middle" letter-spacing="-0.35">50k</text><text x="68" y="156" textLength="107" lengthAdjust="spacing">Magnitude dBV</text><text x="68" y="699" textLength="201.5" lengthAdjust="spacing">f:20936.3 Hz, Magn:-19.29 dB</text><text x="1203" y="699" textLength="39.5" lengthAdjust="spacing">F(Hz)</text><text><tspan x="1245.3" y="177.5">S</tspan><tspan x="1245.3" y="194.5">T</tspan><tspan x="1245.3" y="211.5">E</tspan><tspan x="1245.3" y="228.5">P</tspan><tspan x="1245.3" y="245.5">S</tspan></text></svg></div><div id="sidebar"><svg width="1366" height="741" viewBox="0 0 1366 741" shape-rendering="crispEdges"><rect x="1309" y="97" width="57" height="1" fill="#808080"/><rect x="1309" y="98" width="57" height="1" fill="#ffffff"/><rect x="1309" y="97" width="1" height="625" fill="#ffffff"/><rect x="1310" y="720" width="56" height="1" fill="#808080"/><rect x="1328" y="126" width="16" height="16" fill="#d4d0c8"/><rect x="1328" y="126" width="15" height="1" fill="#d4d0c8"/><rect x="1328" y="126" width="1" height="15" fill="#d4d0c8"/><rect x="1328" y="141" width="16" height="1" fill="#404040"/><rect x="1343" y="126" width="1" height="16" fill="#404040"/><rect x="1329" y="127" width="13" height="1" fill="#ffffff"/><rect x="1329" y="127" width="1" height="13" fill="#ffffff"/><rect x="1329" y="140" width="14" height="1" fill="#808080"/><rect x="1342" y="127" width="1" height="14" fill="#808080"/><rect x="1328" y="143" width="16" height="17" fill="#d4d0c8"/><rect x="1328" y="143" width="15" height="1" fill="#d4d0c8"/><rect x="1328" y="143" width="1" height="16" fill="#d4d0c8"/><rect x="1328" y="159" width="16" height="1" fill="#404040"/><rect x="1343" y="143" width="1" height="17" fill="#404040"/><rect x="1329" y="144" width="13" height="1" fill="#ffffff"/><rect x="1329" y="144" width="1" height="14" fill="#ffffff"/><rect x="1329" y="158" width="14" height="1" fill="#808080"/><rect x="1342" y="144" width="1" height="15" fill="#808080"/><rect x="1335" y="131" width="1" height="1" fill="#000"/><rect x="1334" y="132" width="3" height="1" fill="#000"/><rect x="1333" y="133" width="5" height="1" fill="#000"/><rect x="1332" y="134" width="7" height="1" fill="#000"/><rect x="1332" y="149" width="7" height="1" fill="#000"/><rect x="1333" y="150" width="5" height="1" fill="#000"/><rect x="1334" y="151" width="3" height="1" fill="#000"/><rect x="1335" y="152" width="1" height="1" fill="#000"/><rect x="1322" y="170" width="30" height="20" fill="#d4d0c8"/><rect x="1322" y="170" width="29" height="1" fill="#ffffff"/><rect x="1322" y="170" width="1" height="19" fill="#ffffff"/><rect x="1322" y="189" width="30" height="1" fill="#404040"/><rect x="1351" y="170" width="1" height="20" fill="#404040"/><rect x="1323" y="171" width="27" height="1" fill="#d4d0c8"/><rect x="1323" y="171" width="1" height="17" fill="#d4d0c8"/><rect x="1323" y="188" width="28" height="1" fill="#808080"/><rect x="1350" y="171" width="1" height="18" fill="#808080"/><rect x="1328" y="222" width="16" height="16" fill="#d4d0c8"/><rect x="1328" y="222" width="15" height="1" fill="#d4d0c8"/><rect x="1328" y="222" width="1" height="15" fill="#d4d0c8"/><rect x="1328" y="237" width="16" height="1" fill="#404040"/><rect x="1343" y="222" width="1" height="16" fill="#404040"/><rect x="1329" y="223" width="13" height="1" fill="#ffffff"/><rect x="1329" y="223" width="1" height="13" fill="#ffffff"/><rect x="1329" y="236" width="14" height="1" fill="#808080"/><rect x="1342" y="223" width="1" height="14" fill="#808080"/><rect x="1328" y="239" width="16" height="17" fill="#d4d0c8"/><rect x="1328" y="239" width="15" height="1" fill="#d4d0c8"/><rect x="1328" y="239" width="1" height="16" fill="#d4d0c8"/><rect x="1328" y="255" width="16" height="1" fill="#404040"/><rect x="1343" y="239" width="1" height="17" fill="#404040"/><rect x="1329" y="240" width="13" height="1" fill="#ffffff"/><rect x="1329" y="240" width="1" height="14" fill="#ffffff"/><rect x="1329" y="254" width="14" height="1" fill="#808080"/><rect x="1342" y="240" width="1" height="15" fill="#808080"/><rect x="1335" y="227" width="1" height="1" fill="#000"/><rect x="1334" y="228" width="3" height="1" fill="#000"/><rect x="1333" y="229" width="5" height="1" fill="#000"/><rect x="1332" y="230" width="7" height="1" fill="#000"/><rect x="1332" y="245" width="7" height="1" fill="#000"/><rect x="1333" y="246" width="5" height="1" fill="#000"/><rect x="1334" y="247" width="3" height="1" fill="#000"/><rect x="1335" y="248" width="1" height="1" fill="#000"/><rect x="1322" y="271" width="30" height="21" fill="#d4d0c8"/><rect x="1322" y="271" width="29" height="1" fill="#ffffff"/><rect x="1322" y="271" width="1" height="20" fill="#ffffff"/><rect x="1322" y="291" width="30" height="1" fill="#404040"/><rect x="1351" y="271" width="1" height="21" fill="#404040"/><rect x="1323" y="272" width="27" height="1" fill="#d4d0c8"/><rect x="1323" y="272" width="1" height="18" fill="#d4d0c8"/><rect x="1323" y="290" width="28" height="1" fill="#808080"/><rect x="1350" y="272" width="1" height="19" fill="#808080"/><rect x="1322" y="326" width="15" height="16" fill="#d4d0c8"/><rect x="1322" y="326" width="14" height="1" fill="#d4d0c8"/><rect x="1322" y="326" width="1" height="15" fill="#d4d0c8"/><rect x="1322" y="341" width="15" height="1" fill="#404040"/><rect x="1336" y="326" width="1" height="16" fill="#404040"/><rect x="1323" y="327" width="12" height="1" fill="#ffffff"/><rect x="1323" y="327" width="1" height="13" fill="#ffffff"/><rect x="1323" y="340" width="13" height="1" fill="#808080"/><rect x="1335" y="327" width="1" height="14" fill="#808080"/><rect x="1337" y="326" width="15" height="16" fill="#d4d0c8"/><rect x="1337" y="326" width="14" height="1" fill="#d4d0c8"/><rect x="1337" y="326" width="1" height="15" fill="#d4d0c8"/><rect x="1337" y="341" width="15" height="1" fill="#404040"/><rect x="1351" y="326" width="1" height="16" fill="#404040"/><rect x="1338" y="327" width="12" height="1" fill="#ffffff"/><rect x="1338" y="327" width="1" height="13" fill="#ffffff"/><rect x="1338" y="340" width="13" height="1" fill="#808080"/><rect x="1350" y="327" width="1" height="14" fill="#808080"/><rect x="1326" y="333" width="1" height="1" fill="#000"/><rect x="1327" y="332" width="1" height="3" fill="#000"/><rect x="1328" y="331" width="1" height="5" fill="#000"/><rect x="1345" y="333" width="1" height="1" fill="#000"/><rect x="1344" y="332" width="1" height="3" fill="#000"/><rect x="1343" y="331" width="1" height="5" fill="#000"/><rect x="1322" y="368" width="15" height="16" fill="#d4d0c8"/><rect x="1322" y="368" width="14" height="1" fill="#d4d0c8"/><rect x="1322" y="368" width="1" height="15" fill="#d4d0c8"/><rect x="1322" y="383" width="15" height="1" fill="#404040"/><rect x="1336" y="368" width="1" height="16" fill="#404040"/><rect x="1323" y="369" width="12" height="1" fill="#ffffff"/><rect x="1323" y="369" width="1" height="13" fill="#ffffff"/><rect x="1323" y="382" width="13" height="1" fill="#808080"/><rect x="1335" y="369" width="1" height="14" fill="#808080"/><rect x="1337" y="368" width="15" height="16" fill="#d4d0c8"/><rect x="1337" y="368" width="14" height="1" fill="#d4d0c8"/><rect x="1337" y="368" width="1" height="15" fill="#d4d0c8"/><rect x="1337" y="383" width="15" height="1" fill="#404040"/><rect x="1351" y="368" width="1" height="16" fill="#404040"/><rect x="1338" y="369" width="12" height="1" fill="#ffffff"/><rect x="1338" y="369" width="1" height="13" fill="#ffffff"/><rect x="1338" y="382" width="13" height="1" fill="#808080"/><rect x="1350" y="369" width="1" height="14" fill="#808080"/><rect x="1326" y="375" width="1" height="1" fill="#000"/><rect x="1327" y="374" width="1" height="3" fill="#000"/><rect x="1328" y="373" width="1" height="5" fill="#000"/><rect x="1345" y="375" width="1" height="1" fill="#000"/><rect x="1344" y="374" width="1" height="3" fill="#000"/><rect x="1343" y="373" width="1" height="5" fill="#000"/></svg><span class="t" id="sTop" style="top:108px;line-height:13px;letter-spacing:0.7px;left:1309.0px;width:56px;text-align:center;">Top</span><span class="t" id="sFit" style="top:174px;line-height:13px;letter-spacing:0.7px;left:1309.0px;width:56px;text-align:center;">Fit</span><span class="t" id="sRange" style="top:206px;line-height:13px;letter-spacing:0.3px;left:1309.2px;width:56px;text-align:center;">Range</span><span class="t" id="sSet" style="top:276px;line-height:13px;letter-spacing:0.3px;left:1308.5px;width:56px;text-align:center;">Set</span><span class="t" id="sFrHigh" style="top:308px;line-height:13px;letter-spacing:0.3px;left:1309.2px;width:56px;text-align:center;">FrHigh</span><span class="t" id="sFrLow" style="top:353px;line-height:13px;letter-spacing:0.5px;left:1310.8px;width:56px;text-align:center;">FrLow</span></div><div id="statusbar"><svg width="1366" height="741" viewBox="0 0 1366 741" shape-rendering="crispEdges"><rect x="0" y="721" width="1366" height="1" fill="#ffffff"/><rect x="1109" y="724" width="60" height="1" fill="#808080"/><rect x="1109" y="724" width="1" height="15" fill="#808080"/><rect x="1169" y="724" width="1" height="15" fill="#ffffff"/><rect x="1172" y="724" width="60" height="1" fill="#808080"/><rect x="1172" y="724" width="1" height="15" fill="#808080"/><rect x="1232" y="724" width="1" height="15" fill="#ffffff"/><rect x="1235" y="724" width="130" height="1" fill="#808080"/><rect x="1235" y="724" width="1" height="15" fill="#808080"/><rect x="1365" y="724" width="1" height="15" fill="#ffffff"/><rect x="1364" y="726" width="1" height="1" fill="#fff"/><rect x="1363" y="727" width="1" height="1" fill="#fff"/><rect x="1364" y="727" width="1" height="1" fill="#808080"/><rect x="1362" y="728" width="1" height="1" fill="#fff"/><rect x="1363" y="728" width="1" height="1" fill="#808080"/><rect x="1364" y="728" width="1" height="1" fill="#808080"/><rect x="1361" y="729" width="1" height="1" fill="#fff"/><rect x="1362" y="729" width="1" height="1" fill="#808080"/><rect x="1363" y="729" width="1" height="1" fill="#808080"/><rect x="1364" y="729" width="1" height="1" fill="#d4d0c8"/><rect x="1360" y="730" width="1" height="1" fill="#fff"/><rect x="1361" y="730" width="1" height="1" fill="#808080"/><rect x="1362" y="730" width="1" height="1" fill="#808080"/><rect x="1363" y="730" width="1" height="1" fill="#d4d0c8"/><rect x="1364" y="730" width="1" height="1" fill="#fff"/><rect x="1359" y="731" width="1" height="1" fill="#fff"/><rect x="1360" y="731" width="1" height="1" fill="#808080"/><rect x="1361" y="731" width="1" height="1" fill="#808080"/><rect x="1362" y="731" width="1" height="1" fill="#d4d0c8"/><rect x="1363" y="731" width="1" height="1" fill="#fff"/><rect x="1364" y="731" width="1" height="1" fill="#808080"/><rect x="1358" y="732" width="1" height="1" fill="#fff"/><rect x="1359" y="732" width="1" height="1" fill="#808080"/><rect x="1360" y="732" width="1" height="1" fill="#808080"/><rect x="1361" y="732" width="1" height="1" fill="#d4d0c8"/><rect x="1362" y="732" width="1" height="1" fill="#fff"/><rect x="1363" y="732" width="1" height="1" fill="#808080"/><rect x="1364" y="732" width="1" height="1" fill="#808080"/><rect x="1357" y="733" width="1" height="1" fill="#fff"/><rect x="1358" y="733" width="1" height="1" fill="#808080"/><rect x="1359" y="733" width="1" height="1" fill="#808080"/><rect x="1360" y="733" width="1" height="1" fill="#d4d0c8"/><rect x="1361" y="733" width="1" height="1" fill="#fff"/><rect x="1362" y="733" width="1" height="1" fill="#808080"/><rect x="1363" y="733" width="1" height="1" fill="#808080"/><rect x="1364" y="733" width="1" height="1" fill="#d4d0c8"/><rect x="1356" y="734" width="1" height="1" fill="#fff"/><rect x="1357" y="734" width="1" height="1" fill="#808080"/><rect x="1358" y="734" width="1" height="1" fill="#808080"/><rect x="1359" y="734" width="1" height="1" fill="#d4d0c8"/><rect x="1360" y="734" width="1" height="1" fill="#fff"/><rect x="1361" y="734" width="1" height="1" fill="#808080"/><rect x="1362" y="734" width="1" height="1" fill="#808080"/><rect x="1363" y="734" width="1" height="1" fill="#d4d0c8"/><rect x="1364" y="734" width="1" height="1" fill="#fff"/><rect x="1355" y="735" width="1" height="1" fill="#fff"/><rect x="1356" y="735" width="1" height="1" fill="#808080"/><rect x="1357" y="735" width="1" height="1" fill="#808080"/><rect x="1358" y="735" width="1" height="1" fill="#d4d0c8"/><rect x="1359" y="735" width="1" height="1" fill="#fff"/><rect x="1360" y="735" width="1" height="1" fill="#808080"/><rect x="1361" y="735" width="1" height="1" fill="#808080"/><rect x="1362" y="735" width="1" height="1" fill="#d4d0c8"/><rect x="1363" y="735" width="1" height="1" fill="#fff"/><rect x="1364" y="735" width="1" height="1" fill="#808080"/><rect x="1354" y="736" width="1" height="1" fill="#fff"/><rect x="1355" y="736" width="1" height="1" fill="#808080"/><rect x="1356" y="736" width="1" height="1" fill="#808080"/><rect x="1357" y="736" width="1" height="1" fill="#d4d0c8"/><rect x="1358" y="736" width="1" height="1" fill="#fff"/><rect x="1359" y="736" width="1" height="1" fill="#808080"/><rect x="1360" y="736" width="1" height="1" fill="#808080"/><rect x="1361" y="736" width="1" height="1" fill="#d4d0c8"/><rect x="1362" y="736" width="1" height="1" fill="#fff"/><rect x="1363" y="736" width="1" height="1" fill="#808080"/><rect x="1364" y="736" width="1" height="1" fill="#808080"/><rect x="1353" y="737" width="1" height="1" fill="#fff"/><rect x="1354" y="737" width="1" height="1" fill="#808080"/><rect x="1355" y="737" width="1" height="1" fill="#808080"/><rect x="1356" y="737" width="1" height="1" fill="#d4d0c8"/><rect x="1357" y="737" width="1" height="1" fill="#fff"/><rect x="1358" y="737" width="1" height="1" fill="#808080"/><rect x="1359" y="737" width="1" height="1" fill="#808080"/><rect x="1360" y="737" width="1" height="1" fill="#d4d0c8"/><rect x="1361" y="737" width="1" height="1" fill="#fff"/><rect x="1362" y="737" width="1" height="1" fill="#808080"/><rect x="1363" y="737" width="1" height="1" fill="#808080"/><rect x="1364" y="737" width="1" height="1" fill="#d4d0c8"/><rect x="1352" y="738" width="1" height="1" fill="#fff"/><rect x="1353" y="738" width="1" height="1" fill="#808080"/><rect x="1354" y="738" width="1" height="1" fill="#808080"/><rect x="1355" y="738" width="1" height="1" fill="#d4d0c8"/><rect x="1356" y="738" width="1" height="1" fill="#fff"/><rect x="1357" y="738" width="1" height="1" fill="#808080"/><rect x="1358" y="738" width="1" height="1" fill="#808080"/><rect x="1359" y="738" width="1" height="1" fill="#d4d0c8"/><rect x="1360" y="738" width="1" height="1" fill="#fff"/><rect x="1361" y="738" width="1" height="1" fill="#808080"/><rect x="1362" y="738" width="1" height="1" fill="#808080"/><rect x="1363" y="738" width="1" height="1" fill="#d4d0c8"/><rect x="1364" y="738" width="1" height="1" fill="#fff"/><rect x="0" y="739" width="1366" height="1" fill="#b4b2ac"/><rect x="0" y="740" width="1366" height="1" fill="#585858"/></svg><span class="t" id="stReady" style="top:727px;line-height:13px;letter-spacing:0.4px;left:2px;">Ready</span><span class="t" id="stL" style="top:727px;line-height:13px;letter-spacing:0.1px;left:1115px;">L:-52.5dB</span><span class="t" id="stR" style="top:727px;line-height:13px;letter-spacing:0.2px;left:1178px;">R:-25.0dB</span><span class="t" id="stS" style="top:727px;line-height:13px;letter-spacing:-0.1px;left:1241px;">Stepped Sine Response</span></div></div></body></html>
